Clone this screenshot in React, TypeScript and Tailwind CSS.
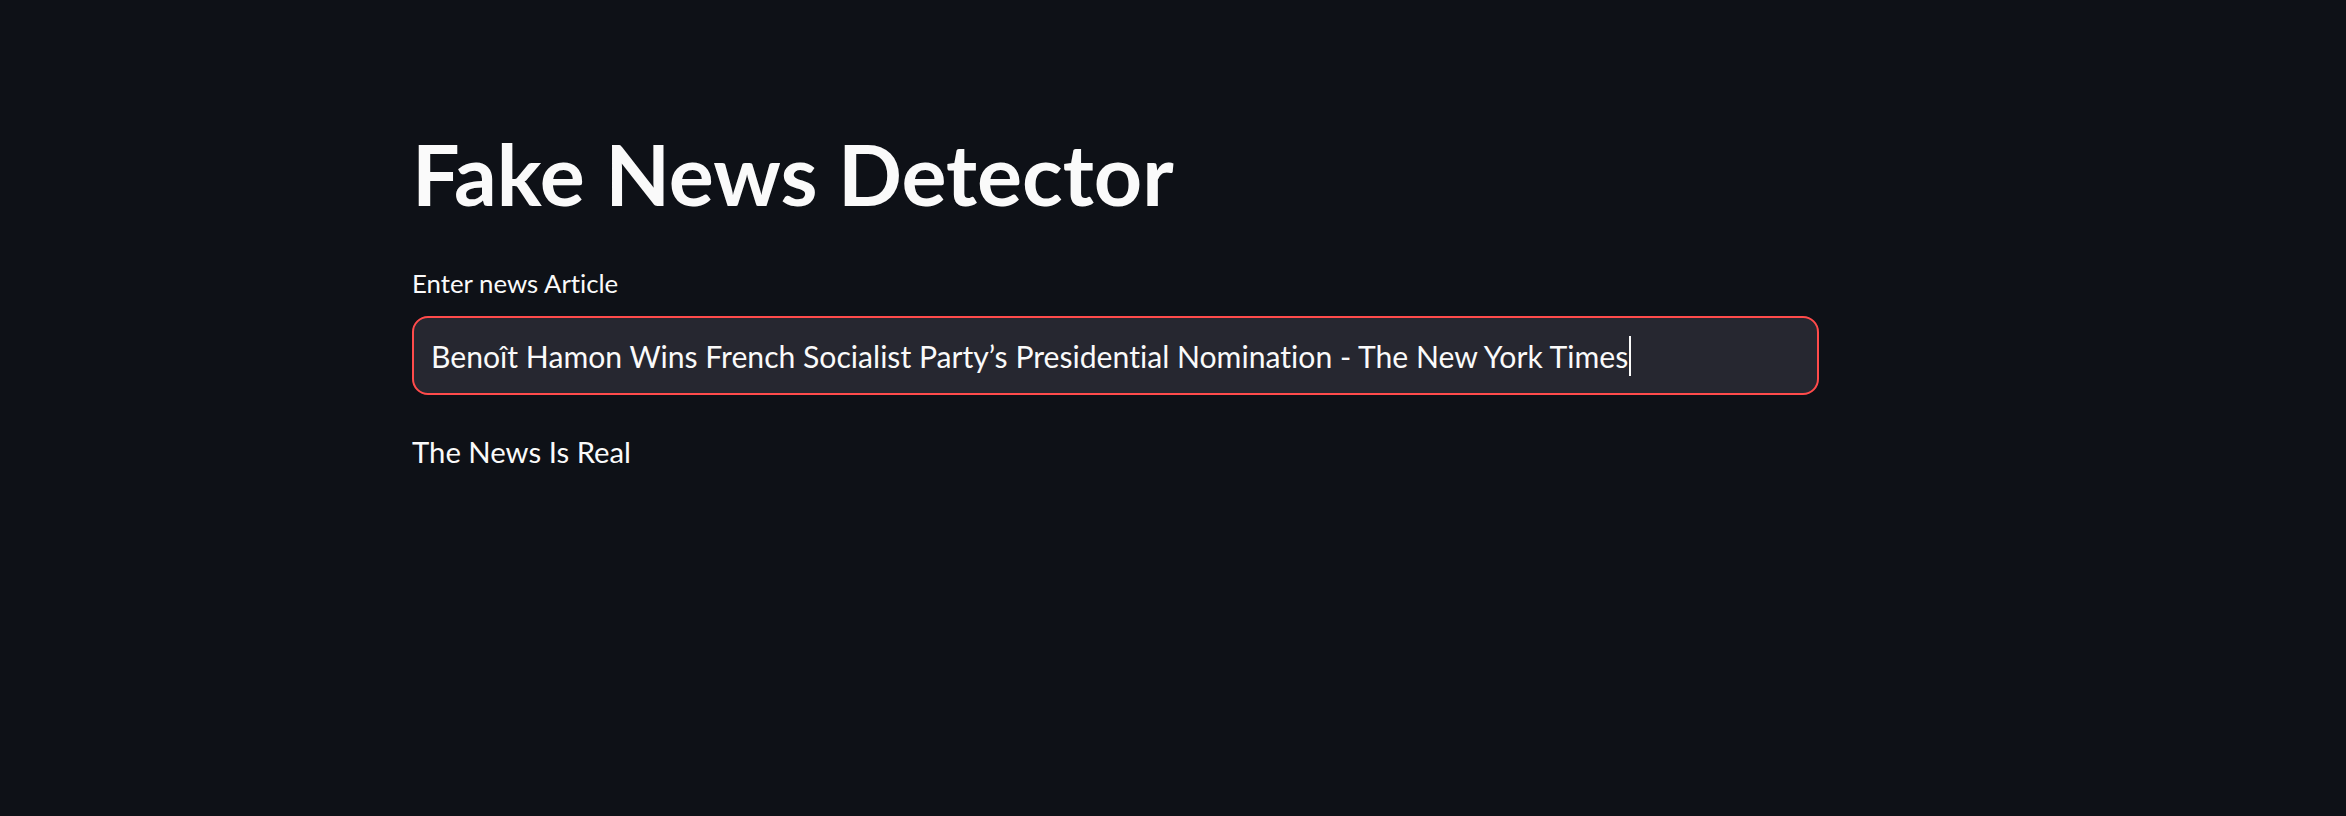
import React from "react";

export default function App() {
  return (
    <div className="min-h-screen w-full bg-[#0e1117] text-[#fafafa] font-['Lato',sans-serif] [font-variant-ligatures:none]">
      <div className="ml-[412px] flex w-[1407px] flex-col pt-[123px]">
        <h1 className="text-[84.3px] font-bold leading-[1.2]">Fake News Detector</h1>
        <label className="mt-[44px] text-[25.8px] leading-[1.2]">Enter news Article</label>
        <div className="mt-[17px] flex h-[79px] items-center rounded-[16px] border-2 border-[#ff4b4b] bg-[#262730] pl-[17px]">
          <span className="text-[30.15px] leading-[1.2] whitespace-pre">
            Benoît Hamon Wins French Socialist Party’s Presidential Nomination - The New York Times
          </span>
          <span className="ml-px h-[40px] w-[2px] bg-[#fafafa]" />
        </div>
        <p className="mt-[39px] text-[29.3px] leading-[1.2]">The News Is Real</p>
      </div>
    </div>
  );
}
